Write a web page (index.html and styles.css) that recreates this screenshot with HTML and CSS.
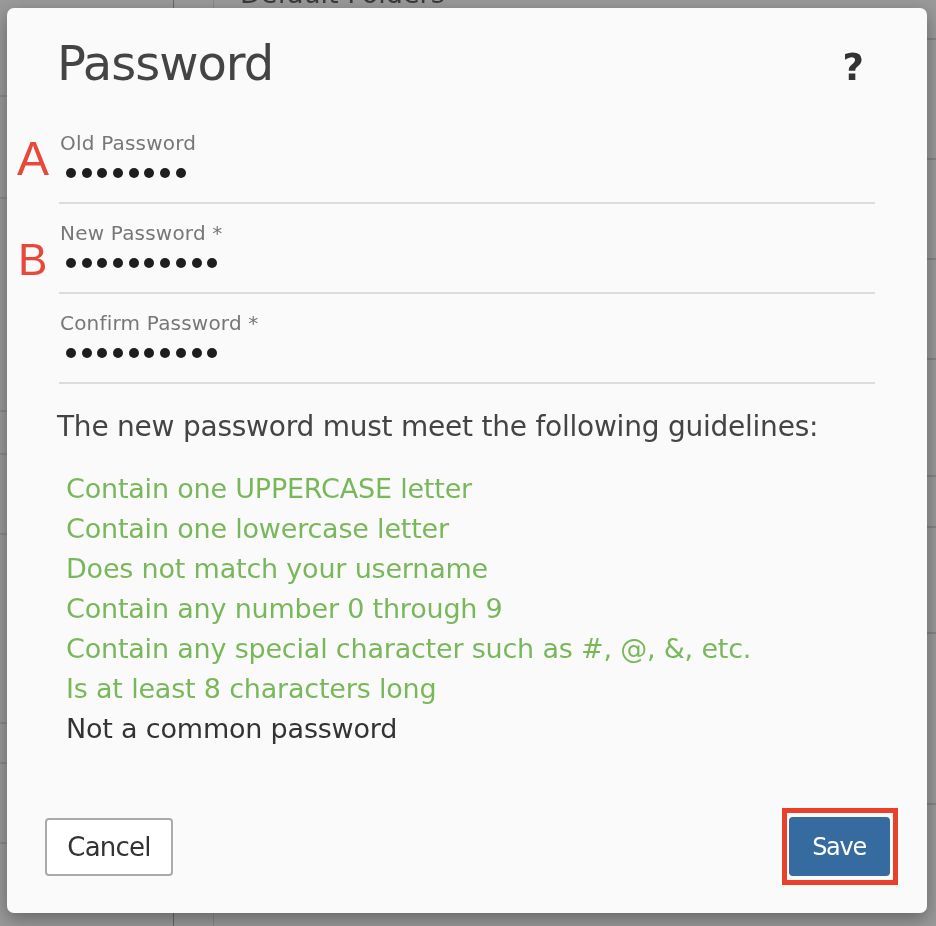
FILE: index.html
```html
<!DOCTYPE html>
<html lang="en">
<head>
<meta charset="utf-8">
<title>Password</title>
<link rel="stylesheet" href="styles.css">
</head>
<body>
<div class="page" aria-hidden="true">
  <div class="page-title">Default Folders</div>
</div>
<div class="modal" role="dialog" aria-labelledby="dlg-title">
  <div class="header">
    <h1 class="title" id="dlg-title">Password</h1>
    <span class="help">?</span>
  </div>
  <div class="fields">
    <div class="row">
      <span class="marker marker-a">A</span>
      <div class="field">
        <label class="label">Old Password</label>
        <div class="dots"><i></i><i></i><i></i><i></i><i></i><i></i><i></i><i></i></div>
      </div>
    </div>
    <div class="row">
      <span class="marker marker-b">B</span>
      <div class="field">
        <label class="label">New Password *</label>
        <div class="dots"><i></i><i></i><i></i><i></i><i></i><i></i><i></i><i></i><i></i><i></i></div>
      </div>
    </div>
    <div class="row">
      <span class="marker"></span>
      <div class="field">
        <label class="label">Confirm Password *</label>
        <div class="dots"><i></i><i></i><i></i><i></i><i></i><i></i><i></i><i></i><i></i><i></i></div>
      </div>
    </div>
  </div>
  <p class="intro">The new password must meet the following guidelines:</p>
  <ul class="rules">
    <li class="ok">Contain one UPPERCASE letter</li>
    <li class="ok">Contain one lowercase letter</li>
    <li class="ok">Does not match your username</li>
    <li class="ok">Contain any number 0 through 9</li>
    <li class="ok">Contain any special character such as #, @, &amp;, etc.</li>
    <li class="ok">Is at least 8 characters long</li>
    <li>Not a common password</li>
  </ul>
  <div class="footer">
    <button class="btn btn-cancel">Cancel</button>
    <span class="highlight"><button class="btn btn-save">Save</button></span>
  </div>
</div>
</body>
</html>
```

FILE: styles.css
```css
* { box-sizing: border-box; }
html, body { margin: 0; padding: 0; }
body {
  width: 936px;
  height: 926px;
  overflow: hidden;
  background: #9a9a9a;
  font-family: "DejaVu Sans", sans-serif;
}
.page {
  position: fixed;
  inset: 0;
  z-index: 0;
  background-color: #9a9a9a;
  background-image:
    linear-gradient(#8a8a8a, #8a8a8a), linear-gradient(#8a8a8a, #8a8a8a),
    linear-gradient(#8a8a8a, #8a8a8a), linear-gradient(#8a8a8a, #8a8a8a),
    linear-gradient(#8a8a8a, #8a8a8a), linear-gradient(#8a8a8a, #8a8a8a),
    linear-gradient(#8a8a8a, #8a8a8a), linear-gradient(#8a8a8a, #8a8a8a),
    linear-gradient(#858585, #858585), linear-gradient(#858585, #858585),
    linear-gradient(#858585, #858585), linear-gradient(#858585, #858585),
    linear-gradient(#858585, #858585), linear-gradient(#858585, #858585),
    linear-gradient(#858585, #858585), linear-gradient(#858585, #858585),
    linear-gradient(#666, #666), linear-gradient(#888, #888);
  background-size:
    8px 2px, 8px 2px, 8px 2px, 8px 2px, 8px 2px, 8px 2px, 8px 2px, 8px 2px,
    10px 2px, 10px 2px, 10px 2px, 10px 2px, 10px 2px, 10px 2px, 10px 2px, 10px 2px,
    1px 926px, 1px 926px;
  background-position:
    0 95px, 0 197px, 0 410px, 0 453px, 0 533px, 0 722px, 0 762px, 0 842px,
    926px 38px, 926px 158px, 926px 258px, 926px 358px, 926px 475px, 926px 526px, 926px 632px, 926px 803px,
    173px 0, 213px 0;
  background-repeat: no-repeat;
}
.page-title {
  margin-left: 240px;
  margin-top: -21px;
  font-size: 27px;
  line-height: 30px;
  color: #3a3a3a;
}
.modal {
  position: relative;
  z-index: 1;
  width: 920px;
  height: 905px;
  margin: 8px 0 0 7px;
  background: #fafafa;
  border-radius: 7px;
  box-shadow: 0 6px 18px rgba(0, 0, 0, 0.35);
  display: flex;
  flex-direction: column;
}
.header {
  height: 106px;
  padding: 27px 63px 0 50px;
  display: flex;
  justify-content: space-between;
  align-items: baseline;
}
.title {
  margin: 0;
  font-size: 48px;
  line-height: 56px;
  font-weight: normal;
  letter-spacing: -1px;
  color: #444;
}
.help {
  font-size: 37px;
  font-weight: bold;
  color: #333;
  line-height: 56px;
}
.fields { display: flex; flex-direction: column; }
.row {
  display: grid;
  grid-template-columns: 52px 816px;
}
.marker {
  font-family: "Liberation Sans", Arial, sans-serif;
  font-size: 48px;
  line-height: 48px;
  color: #e8483a;
}
.marker-a { padding: 21px 0 0 10px; }
.marker-b { font-size: 44px; padding: 32px 0 0 11px; }
.field {
  height: 90px;
  padding: 17px 0 0 1px;
  border-bottom: 2px solid #dcdcdc;
}
.label {
  display: block;
  font-size: 20px;
  line-height: 24px;
  letter-spacing: 0.2px;
  color: #777;
}
.dots {
  display: flex;
  gap: 5.7px;
  height: 20px;
  margin-top: 8px;
  padding-left: 6px;
  align-items: center;
}
.dots i {
  width: 10px;
  height: 10px;
  border-radius: 50%;
  background: #1e1e1e;
}
.intro {
  margin: 23px 0 0 50px;
  font-size: 28px;
  line-height: 40px;
  letter-spacing: -0.23px;
  color: #444;
}
.rules {
  list-style: none;
  margin: 22px 0 0 59px;
  padding: 0;
  font-size: 27px;
  line-height: 40px;
  letter-spacing: -0.2px;
  color: #333;
}
.rules .ok { color: #79b85a; }
.footer {
  margin-top: auto;
  padding: 0 38px 37px 38px;
  display: flex;
  justify-content: space-between;
  align-items: center;
}
.btn {
  font-family: "DejaVu Sans", sans-serif;
  border-radius: 4px;
  cursor: pointer;
  padding: 0;
}
.btn-cancel {
  width: 128px;
  height: 58px;
  background: #fff;
  border: 2px solid #aaa;
  color: #333;
  font-size: 26px;
  letter-spacing: -0.8px;
}
.highlight {
  display: inline-flex;
  border: 5px solid #e8402a;
  padding: 4px 3.5px 4px 2px;
  margin: -9px -9px -9px 0;
}
.btn-save {
  width: 101px;
  height: 59px;
  background: #366b9f;
  border: none;
  color: #fff;
  font-size: 24px;
  letter-spacing: -1.3px;
}
```
